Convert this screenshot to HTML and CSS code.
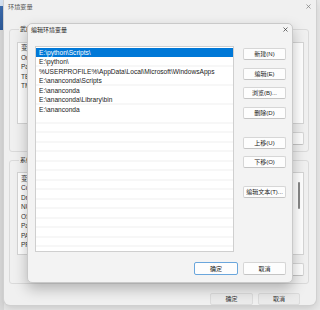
FILE: index.html
```html
<!DOCTYPE html>
<html lang="zh-CN">
<head>
<meta charset="UTF-8" />
<meta name="viewport" content="width=device-width, initial-scale=1" />
<title>环境变量</title>
<link rel="stylesheet" href="styles.css">
</head>
<body>

<div class="desk"></div>

<div class="win">
  <div class="win-title">
    <span>环境变量</span>
    <svg class="x" width="5" height="5" viewBox="0 0 5 5"><path d="M0.5 0.5L4.5 4.5M4.5 0.5L0.5 4.5" stroke="#7a7a7a" stroke-width="0.7"/></svg>
  </div>

  <fieldset class="group g-user">
    <legend>武的用户变量(U)</legend>
    <div class="vlist">
      <div class="vrows">
        <div class="vrow">变量</div>
        <div class="vrow">OneDrive</div>
        <div class="vrow">Path</div>
        <div class="vrow">TEMP</div>
        <div class="vrow">TMP</div>
      </div>
    </div>
    <div class="g-btns">
      <button class="btn">新建(N)...</button>
      <button class="btn">编辑(E)...</button>
      <button class="btn">删除(D)</button>
    </div>
  </fieldset>

  <fieldset class="group g-sys">
    <legend>系统变量(S)</legend>
    <div class="vlist tall">
      <div class="vrows">
        <div class="vrow">变量</div>
        <div class="vrow">ComSpec</div>
        <div class="vrow">DriverData</div>
        <div class="vrow">NUMBER_OF_PROCESSORS</div>
        <div class="vrow">OS</div>
        <div class="vrow">Path</div>
        <div class="vrow">PATHEXT</div>
        <div class="vrow">PROCESSOR_ARCHITECTURE</div>
      </div>
      <div class="vscroll"><div class="thumb"></div></div>
    </div>
    <div class="g-btns">
      <button class="btn">新建(W)...</button>
      <button class="btn">编辑(I)...</button>
      <button class="btn">删除(L)</button>
    </div>
  </fieldset>

  <div class="win-foot">
    <button class="btn dim">确定</button>
    <button class="btn dim">取消</button>
  </div>

  <!-- edit dialog on top -->
  <div class="dlg">
    <div class="dlg-title">
      <span>编辑环境变量</span>
      <svg class="x" width="5" height="5" viewBox="0 0 5 5"><path d="M0.5 0.5L4.5 4.5M4.5 0.5L0.5 4.5" stroke="#333" stroke-width="0.7"/></svg>
    </div>
    <div class="dlg-main">
      <div class="plist">
        <div class="prow sel">E:\python\Scripts\</div>
        <div class="prow">E:\python\</div>
        <div class="prow">%USERPROFILE%\AppData\Local\Microsoft\WindowsApps</div>
        <div class="prow">E:\ananconda\Scripts</div>
        <div class="prow">E:\ananconda</div>
        <div class="prow">E:\ananconda\Library\bin</div>
        <div class="prow">E:\ananconda</div>
      </div>
      <div class="pcol">
        <button class="btn">新建(N)</button>
        <button class="btn">编辑(E)</button>
        <button class="btn">浏览(B)...</button>
        <button class="btn">删除(D)</button>
        <button class="btn sep">上移(U)</button>
        <button class="btn">下移(O)</button>
        <button class="btn sep">编辑文本(T)...</button>
      </div>
    </div>
    <div class="dlg-foot">
      <button class="btn ok wide">确定</button>
      <button class="btn">取消</button>
    </div>
  </div>
</div>

</body>
</html>
```

FILE: styles.css
```css
body {
  margin: 0;
  display: flex;
  height: 310px;
  overflow: hidden;
  background: #e8e8e8;
  font-family: "Liberation Sans", "Noto Sans CJK SC", sans-serif;
  color: #1c1c1c;
}
.desk {
  width: 4px;
  flex: none;
  background: linear-gradient(#d6e2f1 0, #d6e2f1 6px, #3d6db0 6px, #2f5c9c 30px, #d9d9d9 30px);
}
.win {
  position: relative;
  width: 312px;
  height: 305px;
  flex: none;
  background: #f0f0f0;
  box-shadow: 0 0 0 1px #d0d0d0, 0 3px 8px rgba(0, 0, 0, 0.15);
  border-radius: 0 0 6px 6px;
  display: flex;
  flex-direction: column;
}
.win-title {
  height: 14px;
  display: flex;
  align-items: center;
  justify-content: space-between;
  padding: 0 5.5px 0 4px;
  font-size: 6.2px;
  color: #555;
}
.x {
  display: block;
}

/* group boxes */
.group {
  margin: 0 0 0 5px;
  width: 300px;
  min-width: 0;
  box-sizing: border-box;
  border: 1px solid #dadada;
  border-radius: 3px;
  padding: 8px 4px 6px 7px;
}
.group legend {
  font-size: 6px;
  line-height: 9px;
  padding: 0 1px;
  margin-left: 2px;
  color: #222;
}
.g-user {
  margin-top: 11.5px;
}
.g-sys {
  margin-top: 4.5px;
  padding-top: 7px;
  padding-bottom: 7px;
}
.vlist {
  height: 82px;
  background: #fff;
  border: 1px solid #d5d5d5;
  box-sizing: border-box;
  font-size: 6.5px;
  display: flex;
  overflow: hidden;
}
.vlist.tall {
  height: 83px;
}
.vrows {
  flex: 1;
  padding-top: 0.5px;
}
.vrow {
  height: 9.5px;
  line-height: 9.5px;
  padding-left: 3px;
  white-space: nowrap;
  overflow: hidden;
  color: #333;
}
.vscroll {
  width: 7px;
}
.thumb {
  width: 2px;
  height: 27px;
  margin: 9px 0 0 2px;
  background: #878787;
  border-radius: 1px;
}
.g-btns {
  display: flex;
  justify-content: flex-end;
  gap: 5px;
  margin-top: 8px;
}
.g-btns .btn {
  width: 43px;
  height: 13px;
}
.win-foot {
  display: flex;
  justify-content: flex-end;
  gap: 5px;
  margin-top: 9px;
  padding-right: 16px;
}
.win-foot .btn {
  width: 42px;
}
.win-foot .btn:first-child {
  width: 43px;
}

/* buttons */
.btn {
  box-sizing: border-box;
  height: 12px;
  padding: 0;
  font: 6px "Liberation Sans", "Noto Sans CJK SC", sans-serif;
  line-height: 10px;
  background: #fdfdfd;
  border: 1px solid #d6d6d6;
  border-bottom-color: #c4c4c4;
  border-radius: 2px;
  color: #1a1a1a;
  white-space: nowrap;
}
.btn.dim {
  background: #ebebeb;
  border-color: #dcdcdc;
  color: #333;
}

/* edit dialog */
.dlg {
  position: absolute;
  left: 23px;
  top: 23px;
  width: 266px;
  height: 260px;
  box-sizing: border-box;
  background: #f3f3f3;
  border: 1px solid #c9c9c9;
  border-radius: 5px;
  box-shadow: 0 6px 14px rgba(0, 0, 0, 0.25);
  display: flex;
  flex-direction: column;
}
.dlg-title {
  height: 11px;
  display: flex;
  align-items: center;
  justify-content: space-between;
  padding: 0 4.5px 0 3px;
  font-size: 6px;
  color: #1a1a1a;
}
.dlg-main {
  display: flex;
  gap: 9px;
  margin: 11px 6px 0 7px;
}
.plist {
  width: 199px;
  height: 206px;
  box-sizing: border-box;
  border: 1px solid #cfcfcf;
  padding-top: 0.5px;
  background: #fff repeating-linear-gradient(#fff 0, #fff 8.5px, #efefef 8.5px, #efefef 9.5px);
  background-origin: content-box;
  font-size: 6.6px;
  overflow: hidden;
}
.prow {
  height: 9.5px;
  line-height: 9.5px;
  padding-left: 3px;
  white-space: nowrap;
  color: #222;
}
.prow.sel {
  background: #0078d7;
  color: #fff;
}
.pcol {
  display: flex;
  flex-direction: column;
  gap: 7.5px;
  width: 43px;
  padding-top: 2px;
}
.pcol .sep {
  margin-top: 10.5px;
}
.dlg-foot {
  display: flex;
  justify-content: flex-end;
  gap: 5px;
  margin: auto 6px 7px 0;
}
.dlg-foot .btn {
  width: 43px;
  height: 13px;
}
.dlg-foot .wide {
  width: 44px;
}
.btn.ok {
  border-color: #6aa6dc;
}
```
